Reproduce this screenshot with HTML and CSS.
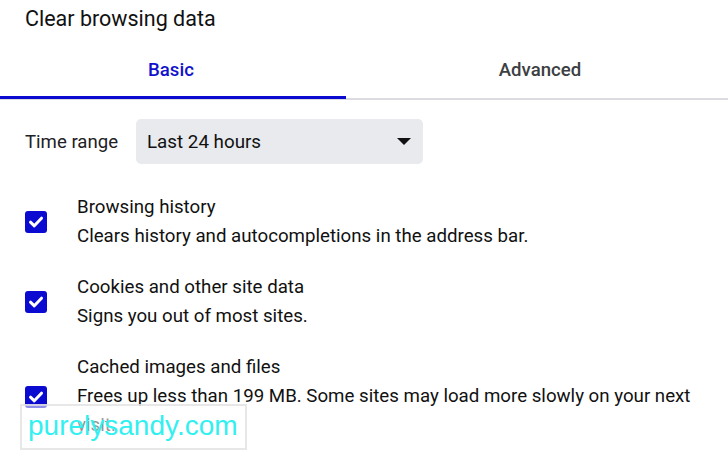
FILE: index.html
```html
<!DOCTYPE html>
<html lang="en">
<head>
    <meta charset="UTF-8">
    <meta name="viewport" content="width=device-width, initial-scale=1.0">
    <title>Clear browsing data</title>
    <link rel="stylesheet" href="styles.css">
</head>
<body>

    <!-- Dialog -->
    <div class="dialog">
        <h1 class="title">Clear browsing data</h1>

        <!-- Tabs -->
        <div class="tabs">
            <div class="tab active">Basic</div>
            <div class="tab">Advanced</div>
        </div>

        <!-- Time range -->
        <div class="range-row">
            <span class="range-label">Time range</span>
            <div class="select">
                <span>Last 24 hours</span>
                <span class="arrow"></span>
            </div>
        </div>

        <!-- Options -->
        <div class="option">
            <span class="checkbox">
                <svg viewBox="0 0 22 22" width="22" height="22"><path d="M5.5 11.2 L9.3 14.8 L16.5 7.2" fill="none" stroke="#fff" stroke-width="3" stroke-linecap="round" stroke-linejoin="round"/></svg>
            </span>
            <div class="option-text">
                <div class="option-title">Browsing history</div>
                <div class="option-desc">Clears history and autocompletions in the address bar.</div>
            </div>
        </div>

        <div class="option">
            <span class="checkbox">
                <svg viewBox="0 0 22 22" width="22" height="22"><path d="M5.5 11.2 L9.3 14.8 L16.5 7.2" fill="none" stroke="#fff" stroke-width="3" stroke-linecap="round" stroke-linejoin="round"/></svg>
            </span>
            <div class="option-text">
                <div class="option-title">Cookies and other site data</div>
                <div class="option-desc">Signs you out of most sites.</div>
            </div>
        </div>

        <div class="option">
            <span class="checkbox">
                <svg viewBox="0 0 22 22" width="22" height="22"><path d="M5.5 11.2 L9.3 14.8 L16.5 7.2" fill="none" stroke="#fff" stroke-width="3" stroke-linecap="round" stroke-linejoin="round"/></svg>
            </span>
            <div class="option-text">
                <div class="option-title">Cached images and files</div>
                <div class="option-desc">Frees up less than 199 MB. Some sites may load more slowly on your next visit.</div>
            </div>
        </div>
    </div>

    <!-- Watermark -->
    <div class="watermark">purelysandy.com</div>

</body>
</html>
```

FILE: styles.css
```css
/* General Styling */
body {
    font-family: Roboto, "Liberation Sans", sans-serif;
    margin: 0;
    background: #ffffff;
    color: #202124;
    width: 728px;
    height: 460px;
    overflow: hidden;
    position: relative;
}

.dialog {
    padding-top: 5px;
}

.title {
    margin: 0 0 0 25px;
    font-size: 21.5px;
    font-weight: 400;
    line-height: 27px;
    color: #111111;
}

/* Tabs */
.tabs {
    display: flex;
    margin-top: 27px;
    border-bottom: 2px solid #dadce0;
}

.tab {
    text-align: center;
    font-size: 18.6px;
    font-weight: 500;
    color: #3c4043;
    padding-bottom: 17px;
    line-height: 22px;
}

.tab:first-child {
    width: 342px;
    padding-right: 4px;
}

.tab:last-child {
    flex: 1;
    padding-left: 6px;
}

.tab.active {
    color: #1212cc;
    box-shadow: inset 0 -3px 0 #0a0ad0;
    margin-bottom: -1px;
    padding-bottom: 18px;
}

/* Time range */
.range-row {
    display: flex;
    align-items: center;
    margin: 19px 0 0 25px;
}

.range-label {
    font-size: 18.6px;
    width: 111px;
}

.select {
    width: 287px;
    height: 45px;
    box-sizing: border-box;
    background: #e8eaed;
    border-radius: 5px;
    display: flex;
    align-items: center;
    justify-content: space-between;
    padding: 0 12px 0 11px;
    font-size: 18.8px;
    color: #111111;
}

.arrow {
    width: 0;
    height: 0;
    border-left: 7px solid transparent;
    border-right: 7px solid transparent;
    border-top: 7px solid #111111;
}

/* Options */
.option {
    display: flex;
    align-items: center;
    margin-left: 25px;
    margin-top: 29px;
}

.option + .option {
    margin-top: 22px;
}

.checkbox {
    width: 22px;
    height: 22px;
    background: #0a0ad0;
    border-radius: 3px;
    flex-shrink: 0;
    display: flex;
}

.option-text {
    margin-left: 30px;
    font-size: 18.7px;
    line-height: 29px;
    color: #111111;
    padding-right: 20px;
}

/* Watermark */
.watermark {
    position: absolute;
    left: 20px;
    top: 404px;
    width: 227px;
    height: 46px;
    box-sizing: border-box;
    border: 2px solid rgba(225, 225, 225, 0.8);
    background: rgba(255, 255, 255, 0.55);
    color: #33f0f0;
    font-family: "Liberation Sans", Arial, sans-serif;
    font-size: 28px;
    line-height: 40px;
    padding-left: 6px;
}
```
